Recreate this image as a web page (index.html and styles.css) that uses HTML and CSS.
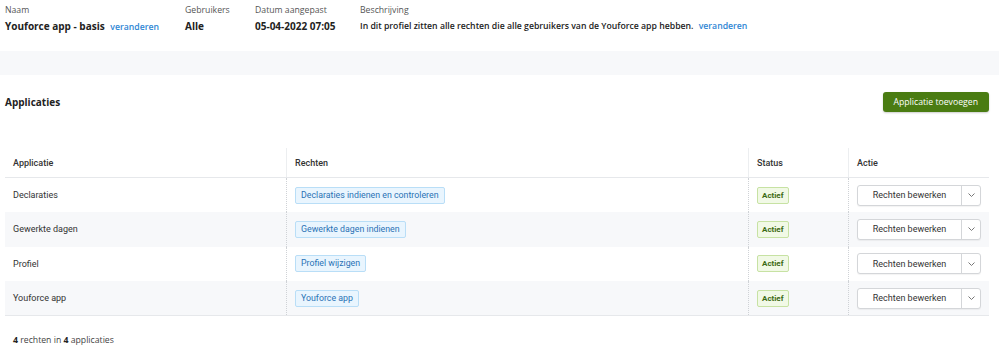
FILE: index.html
```html
<!DOCTYPE html>
<html lang="nl">
<head>
    <meta charset="UTF-8">
    <meta name="viewport" content="width=device-width, initial-scale=1.0">
    <title>Profiel - Youforce app - basis</title>
    <link rel="stylesheet" href="styles.css">
</head>
<body>

    <!-- Profiel gegevens -->
    <div class="profile-header">
        <div class="field field-name">
            <span class="label">Naam</span>
            <span class="value">Youforce app - basis <a class="link" href="#">veranderen</a></span>
        </div>
        <div class="field field-users">
            <span class="label">Gebruikers</span>
            <span class="value">Alle</span>
        </div>
        <div class="field field-date">
            <span class="label">Datum aangepast</span>
            <span class="value">05-04-2022 07:05</span>
        </div>
        <div class="field">
            <span class="label">Beschrijving</span>
            <span class="value value-desc">In dit profiel zitten alle rechten die alle gebruikers van de Youforce app hebben. <a class="link" href="#">veranderen</a></span>
        </div>
    </div>

    <div class="band"></div>

    <!-- Applicaties -->
    <div class="apps">
        <div class="apps-head">
            <h2>Applicaties</h2>
            <button class="add-button">Applicatie toevoegen</button>
        </div>

        <table class="apps-table">
            <thead>
                <tr>
                    <th class="col-app">Applicatie</th>
                    <th class="col-rights">Rechten</th>
                    <th class="col-status">Status</th>
                    <th class="col-action">Actie</th>
                </tr>
            </thead>
            <tbody id="app-rows"></tbody>
        </table>

        <p class="summary"><b>4</b> rechten in <b>4</b> applicaties</p>
    </div>

    <script>
        const apps = [
            { name: "Declaraties", right: "Declaraties indienen en controleren" },
            { name: "Gewerkte dagen", right: "Gewerkte dagen indienen" },
            { name: "Profiel", right: "Profiel wijzigen" },
            { name: "Youforce app", right: "Youforce app" }
        ];

        const rows = document.getElementById("app-rows");
        apps.forEach(app => {
            let tr = document.createElement("tr");
            tr.innerHTML = `
                <td>${app.name}</td>
                <td><span class="tag">${app.right}</span></td>
                <td><span class="badge">Actief</span></td>
                <td>
                    <div class="split-button">
                        <button class="split-main">Rechten bewerken</button>
                        <button class="split-toggle">
                            <svg width="7" height="4" viewBox="0 0 7 4"><path d="M0.5 0.5l3 3 3-3" fill="none" stroke="#777" stroke-width="1"/></svg>
                        </button>
                    </div>
                </td>`;
            rows.appendChild(tr);
        });
    </script>
</body>
</html>
```

FILE: styles.css
```css
body {
    font-family: "Open Sans", Arial, sans-serif;
    color: #222;
    background: #fff;
    margin: 0;
}
.profile-header {
    display: flex;
    padding: 4px 10px 0 5px;
    height: 47px;
    box-sizing: border-box;
}
.field {
    display: flex;
    flex-direction: column;
}
.field-name {
    width: 180px;
}
.field-users {
    width: 70px;
}
.field-date {
    width: 105px;
}
.label {
    font-size: 8.7px;
    color: #555;
    line-height: 13px;
}
.value {
    font-size: 10px;
    font-weight: 700;
    line-height: 16px;
    margin-top: 1px;
}
.value-desc {
    font-size: 8.7px;
    font-weight: 600;
}
.link {
    color: #2e86d4;
    text-decoration: none;
    font-size: 8.7px;
    font-weight: 600;
    margin-left: 3px;
}
.band {
    height: 24px;
    background: #f7f8fa;
    margin-top: 4px;
}
.apps {
    padding: 0 10px 0 5px;
}
.apps-head {
    display: flex;
    justify-content: space-between;
    align-items: center;
    height: 53px;
}
.apps-head h2 {
    font-size: 10px;
    font-weight: 700;
    margin: 0;
}
.add-button {
    background: #4a7c12;
    color: #fff;
    border: none;
    border-radius: 3px;
    font-family: "Open Sans", Arial, sans-serif;
    font-size: 8.7px;
    height: 20px;
    padding: 0 11px;
    box-shadow: 0 1px 2px rgba(0,0,0,0.2);
}
.apps-table {
    width: 100%;
    border-collapse: collapse;
    margin-top: 20px;
    font-family: Roboto, Arial, sans-serif;
    font-size: 9px;
    color: #333;
}
.apps-table th {
    text-align: left;
    font-weight: 500;
    height: 29px;
    padding: 0 8px;
    border-bottom: 1px solid #e6e8eb;
    border-left: 1px solid #eceef0;
}
.apps-table td {
    height: 34.3px;
    padding: 0 8px;
    border-left: 1px dotted #cfd2d6;
}
.apps-table th:first-child,
.apps-table td:first-child {
    border-left: none;
}
.apps-table tbody tr:nth-child(even) {
    background: #f7f8fa;
}
.apps-table tbody tr:last-child {
    border-bottom: 1px solid #e6e8eb;
}
.col-app {
    width: 265px;
}
.col-status {
    width: 83px;
}
.col-action {
    width: 118px;
}
.tag {
    display: inline-block;
    background: #e9f5fe;
    border: 1px solid #b9def7;
    color: #2a72b5;
    border-radius: 2px;
    padding: 2px 5px;
    line-height: 11px;
    font-size: 8.8px;
}
.badge {
    display: inline-block;
    background: #f1f9e6;
    border: 1px solid #c7e2a3;
    color: #3d6a14;
    font-weight: 700;
    font-size: 8px;
    border-radius: 2px;
    padding: 3px 4px;
    line-height: 9px;
}
.split-button {
    display: flex;
    width: 122px;
    height: 19px;
    border: 1px solid #d4d6d9;
    border-radius: 3px;
    background: #fff;
    box-shadow: 0 1px 1px rgba(0,0,0,0.05);
}
.split-main,
.split-toggle {
    background: none;
    border: none;
    font-family: Roboto, Arial, sans-serif;
    font-size: 9px;
    color: #333;
    padding: 0;
}
.split-main {
    flex: 1;
}
.split-toggle {
    width: 19px;
    border-left: 1px solid #d4d6d9;
    display: flex;
    align-items: center;
    justify-content: center;
}
.summary {
    font-size: 8.7px;
    color: #444;
    margin: 18px 0 0 8px;
}
.summary b {
    color: #222;
}
```
